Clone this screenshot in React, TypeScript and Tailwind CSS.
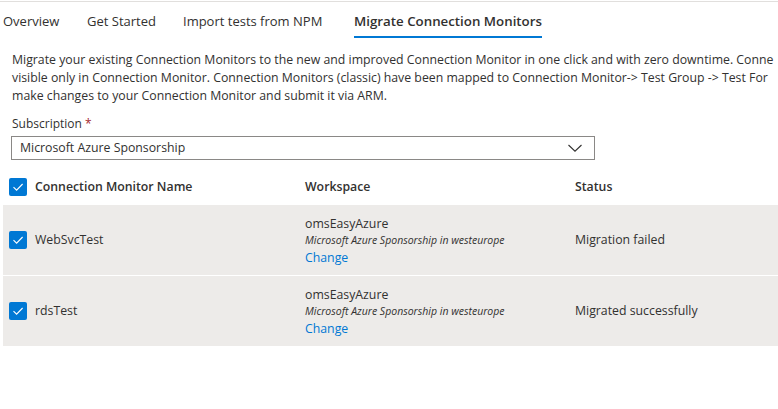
const Check = () => (
  <div className="flex h-[18px] w-[18px] shrink-0 items-center justify-center rounded-[2px] bg-[#0078d4]">
    <svg width="14" height="14" viewBox="0 0 14 14" fill="none">
      <path d="M2.5 7.2 L5.6 10.2 L11.6 4" stroke="white" strokeWidth="1.1" />
    </svg>
  </div>
)

const rows = [
  { name: "WebSvcTest", ws: "omsEasyAzure", sub: "Microsoft Azure Sponsorship in westeurope", status: "Migration failed" },
  { name: "rdsTest", ws: "omsEasyAzure", sub: "Microsoft Azure Sponsorship in westeurope", status: "Migrated successfully" },
]

const App = () => {
  return (
    <div
      className="flex h-[409px] w-[778px] flex-col overflow-hidden bg-white text-[#323130]"
      style={{ fontFamily: '"Segoe UI", "Open Sans", "Noto Sans", sans-serif' }}
    >
      <div className="mt-px h-px w-full bg-[#e1dfdd]" />

      {/* tabs */}
      <div className="flex items-start pl-[3px] pt-[9px] text-[13px] leading-[20px]">
        <div className="w-[84px]">Overview</div>
        <div className="w-[96px]">Get Started</div>
        <div className="w-[171px]">Import tests from NPM</div>
        <div className="flex flex-col gap-[5px]">
          <span className="text-[13.3px] font-semibold">Migrate Connection Monitors</span>
          <div className="h-[2px] w-full bg-[#0078d4]" />
        </div>
      </div>

      {/* description */}
      <div className="mt-[13px] whitespace-nowrap px-3 text-[12.3px] leading-[18px]">
        <div>Migrate your existing Connection Monitors to the new and improved Connection Monitor in one click and with zero downtime. Conne</div>
        <div>visible only in Connection Monitor. Connection Monitors (classic) have been mapped to Connection Monitor-&gt; Test Group -&gt; Test For</div>
        <div>make changes to your Connection Monitor and submit it via ARM.</div>
      </div>

      {/* subscription */}
      <div className="mt-[10px] px-3 text-[12px] leading-[18px]">
        Subscription <span className="text-[#a4262c]">*</span>
      </div>
      <div className="ml-[11px] mt-[3px] flex h-[24px] w-[584px] items-center justify-between border border-[#8a8886] pl-[8px] pr-[11px] text-[12.3px]">
        <span>Microsoft Azure Sponsorship</span>
        <svg width="16" height="10" viewBox="0 0 16 10" fill="none">
          <path d="M1.5 2 L8 8.2 L14.5 2" stroke="#323130" strokeWidth="1.1" />
        </svg>
      </div>

      {/* table header */}
      <div className="mt-[9px] flex h-[36px] items-center pl-[9px] text-[12.3px] font-semibold">
        <Check />
        <div className="ml-[8px] w-[270px]">Connection Monitor Name</div>
        <div className="w-[270px]">Workspace</div>
        <div>Status</div>
      </div>

      {/* rows */}
      <div className="ml-[3px] flex flex-col gap-px">
        {rows.map((r) => (
          <div key={r.name} className="flex h-[70px] items-center bg-[#edebe9] pl-[6px] text-[12.3px]">
            <Check />
            <div className="ml-[8px] w-[270px]">{r.name}</div>
            <div className="flex w-[270px] flex-col leading-[17px]">
              <span>{r.ws}</span>
              <span className="text-[10.5px] italic">{r.sub}</span>
              <span className="text-[#0078d4]">Change</span>
            </div>
            <div>{r.status}</div>
          </div>
        ))}
      </div>
    </div>
  )
}

export default App
